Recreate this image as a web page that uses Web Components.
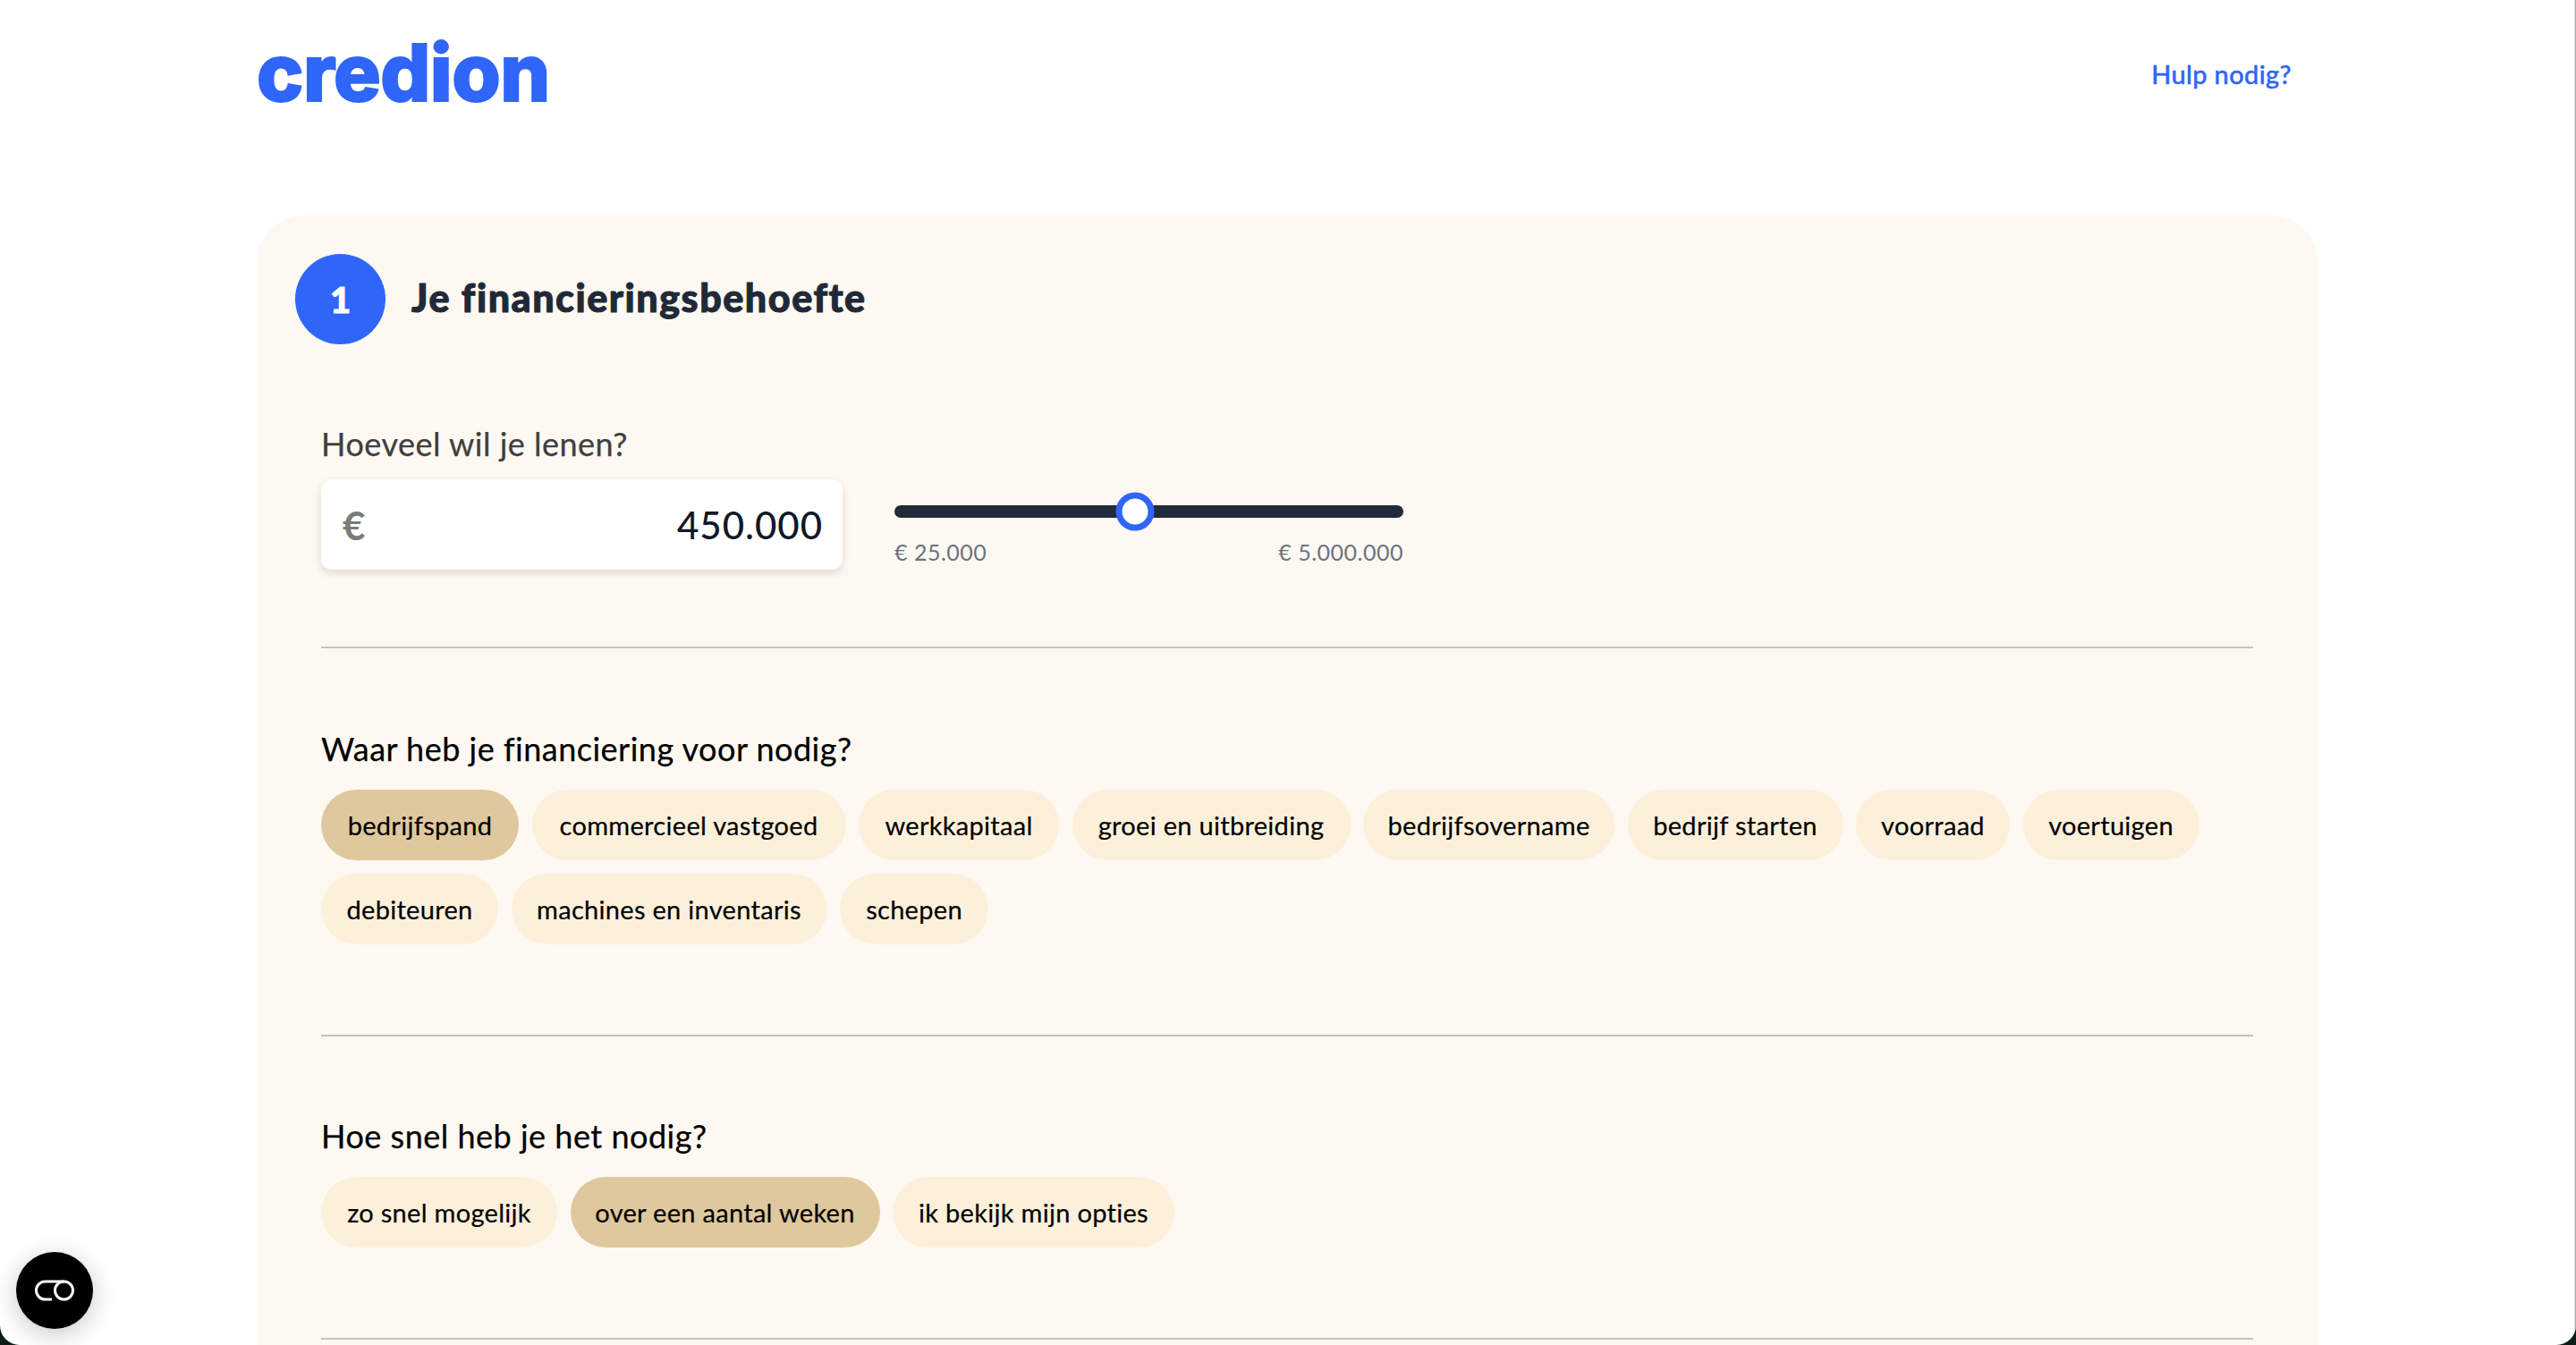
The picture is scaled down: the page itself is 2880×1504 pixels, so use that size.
<!DOCTYPE html>
<html lang="nl">
<head>
<meta charset="utf-8">
<title>Credion</title>
<style>
  html, body { margin: 0; height: 100%; background: #fff; }
  body { overflow: hidden; font-family: Lato, "Liberation Sans", sans-serif; color: #000; }
</style>
</head>
<body>
<credion-page>
  <site-header link="Hulp nodig?"></site-header>
  <finance-card>
    <step-heading number="1">Je financieringsbehoefte</step-heading>
    <amount-section label="Hoeveel wil je lenen?" value="450.000" min="€ 25.000" max="€ 5.000.000" position="47.3"></amount-section>
    <choice-section label="Waar heb je financiering voor nodig?">
      <choice-pill selected w="221">bedrijfspand</choice-pill>
      <choice-pill w="351">commercieel vastgoed</choice-pill>
      <choice-pill w="224">werkkapitaal</choice-pill>
      <choice-pill w="311">groei en uitbreiding</choice-pill>
      <choice-pill w="281">bedrijfsovername</choice-pill>
      <choice-pill w="241">bedrijf starten</choice-pill>
      <choice-pill w="172">voorraad</choice-pill>
      <choice-pill w="197">voertuigen</choice-pill>
      <choice-pill w="198">debiteuren</choice-pill>
      <choice-pill w="353">machines en inventaris</choice-pill>
      <choice-pill w="166">schepen</choice-pill>
    </choice-section>
    <choice-section label="Hoe snel heb je het nodig?">
      <choice-pill w="264">zo snel mogelijk</choice-pill>
      <choice-pill selected w="346">over een aantal weken</choice-pill>
      <choice-pill w="315">ik bekijk mijn opties</choice-pill>
    </choice-section>
  </finance-card>
</credion-page>
<chat-button></chat-button>
<window-frame></window-frame>

<script>
class CredionPage extends HTMLElement {
    constructor() {
        super();
        this.attachShadow({ mode: 'open' });
        this.shadowRoot.innerHTML = `
      <style>
        :host { display: block; padding-left: 287px; width: 2304px; }
      </style>
      <slot></slot>
    `;
    }
}

class SiteHeader extends HTMLElement {
    constructor() {
        super();
        this.attachShadow({ mode: 'open' });
        this.shadowRoot.innerHTML = `
      <style>
        :host { display: flex; justify-content: space-between; align-items: flex-start; height: 241px; padding-right: 29px; }
        .logo {
          font: 800 88px/100px Inter, sans-serif;
          color: #2f65f9;
          -webkit-text-stroke: 2px #2f65f9;
          letter-spacing: -.5px;
          margin-top: 31px;
        }
        a {
          font: 500 29px/40px Lato, sans-serif;
          letter-spacing: .35px;
          -webkit-text-stroke: .4px #2f65f9;
          color: #2f65f9;
          text-decoration: none;
          margin-top: 63px;
        }
      </style>
      <div class="logo">credion</div>
      <a href="#">${this.getAttribute('link')}</a>
    `;
    }
}

class FinanceCard extends HTMLElement {
    constructor() {
        super();
        this.attachShadow({ mode: 'open' });
        this.shadowRoot.innerHTML = `
      <style>
        :host {
          display: block;
          background: #fdf8f1;
          border-radius: 52px;
          padding: 43px 72px 200px;
        }
      </style>
      <slot></slot>
    `;
    }
}

class StepHeading extends HTMLElement {
    constructor() {
        super();
        this.attachShadow({ mode: 'open' });
        this.shadowRoot.innerHTML = `
      <style>
        :host { display: flex; align-items: center; gap: 29px; margin-left: -29px; height: 101px; }
        .num {
          width: 101px; height: 101px; border-radius: 50%;
          background: #2f65f9; color: #fff;
          display: flex; align-items: center; justify-content: center;
          font: 900 40px/1 Lato, sans-serif;
          -webkit-text-stroke: 1px #fff;
        }
        h2 {
          margin: -3px 0 0;
          font: 900 43px/50px Lato, sans-serif;
          letter-spacing: 1.55px;
          -webkit-text-stroke: 1px #1f2937;
          color: #1f2937;
        }
      </style>
      <div class="num">${this.getAttribute('number')}</div>
      <h2><slot></slot></h2>
    `;
    }
}

class AmountSection extends HTMLElement {
    constructor() {
        super();
        this.attachShadow({ mode: 'open' });
        this.shadowRoot.innerHTML = `
      <style>
        :host { display: block; padding: 87px 0 86px; margin-bottom: 1px; border-bottom: 2px solid #c6c3bc; }
        .label {
          font: 400 36px/48px Lato, sans-serif; letter-spacing: .5px;
          -webkit-text-stroke: .25px #3f3f3f;
          color: #3f3f3f; margin-bottom: 16px;
        }
        .row { display: flex; gap: 58px; align-items: flex-start; }
        .field {
          width: 583px; height: 101px; box-sizing: border-box;
          padding: 0 22px 0 24px;
          display: flex; align-items: center; justify-content: space-between;
          background: #fff; border-radius: 12px;
          box-shadow: 0 4px 8px rgba(60, 40, 10, .14);
        }
        .euro { font: 700 44px/1 Lato, sans-serif; color: #7b7b7b; }
        .value { font: 500 42px/1 Lato, sans-serif; letter-spacing: 1px; color: #111827; }
        range-slider { width: 569px; padding-top: 29px; }
      </style>
      <div class="label">${this.getAttribute('label')}</div>
      <div class="row">
        <div class="field"><span class="euro">€</span><span class="value">${this.getAttribute('value')}</span></div>
        <range-slider min="${this.getAttribute('min')}" max="${this.getAttribute('max')}" position="${this.getAttribute('position')}"></range-slider>
      </div>
    `;
    }
}

class RangeSlider extends HTMLElement {
    constructor() {
        super();
        this.attachShadow({ mode: 'open' });
        this.shadowRoot.innerHTML = `
      <style>
        :host { display: block; }
        .track { position: relative; height: 14px; border-radius: 7px; background: #222b3a; }
        .thumb {
          position: absolute; top: 50%;
          width: 43px; height: 43px; box-sizing: border-box;
          border: 7px solid #2f65f9; border-radius: 50%; background: #fff;
          transform: translate(-50%, -50%);
        }
        .ends {
          display: flex; justify-content: space-between;
          margin-top: 22px; font: 400 25px/32px Lato, sans-serif; letter-spacing: .5px; color: #6b7280;
        }
      </style>
      <div class="track"><div class="thumb" style="left:${this.getAttribute('position')}%"></div></div>
      <div class="ends"><span>${this.getAttribute('min')}</span><span>${this.getAttribute('max')}</span></div>
    `;
    }
}

class ChoiceSection extends HTMLElement {
    constructor() {
        super();
        this.attachShadow({ mode: 'open' });
        this.shadowRoot.innerHTML = `
      <style>
        :host { display: block; padding: 87px 0 101px; border-bottom: 2px solid #c6c3bc; }
        .label {
          font: 400 36px/48px Lato, sans-serif; letter-spacing: .5px;
          -webkit-text-stroke: .25px #000;
          margin-bottom: 22px;
        }
        .pills { display: flex; flex-wrap: wrap; gap: 15px 14.5px; }
      </style>
      <div class="label">${this.getAttribute('label')}</div>
      <div class="pills"><slot></slot></div>
    `;
    }
}

class ChoicePill extends HTMLElement {
    constructor() {
        super();
        this.attachShadow({ mode: 'open' });
        const w = this.getAttribute('w');
        this.shadowRoot.innerHTML = `
      <style>
        :host {
          display: flex; align-items: center; justify-content: center;
          width: ${w}px; height: 79px;
          border-radius: 40px;
          background: #fcf0db;
          font: 400 29px/1 Lato, sans-serif;
          letter-spacing: .3px;
          -webkit-text-stroke: .2px #000;
          white-space: nowrap;
        }
        :host([selected]) { background: #dfc89d; }
      </style>
      <slot></slot>
    `;
    }
}

class ChatButton extends HTMLElement {
    constructor() {
        super();
        this.attachShadow({ mode: 'open' });
        this.shadowRoot.innerHTML = `
      <style>
        :host {
          position: fixed; left: 18px; top: 1400px;
          width: 86px; height: 86px; border-radius: 50%;
          background: #000;
          box-shadow: 0 6px 28px rgba(0, 0, 0, .22);
          display: flex; align-items: center; justify-content: center;
        }
      </style>
      <svg width="46" height="24" viewBox="0 0 46 24" fill="none" stroke="#fff" stroke-width="3">
        <path d="M34 2H12.5a10 10 0 0 0 0 20H20"/>
        <circle cx="33.5" cy="12" r="10"/>
      </svg>
    `;
    }
}

// rounded window corners and the thin edge on the right
class WindowFrame extends HTMLElement {
    constructor() {
        super();
        this.attachShadow({ mode: 'open' });
        this.shadowRoot.innerHTML = `
      <style>
        :host { position: fixed; inset: 0; overflow: hidden; pointer-events: none; }
        .frame {
          position: absolute; inset: 0;
          border-radius: 0 0 22px 22px;
          box-shadow: 0 0 0 30px #0f1d16;
          overflow: hidden;
        }
        .edge {
          position: absolute; top: 0; right: 0; bottom: 0; width: 2px;
          background: linear-gradient(to right, transparent, #8a8a8a);
        }
      </style>
      <div class="frame"><div class="edge"></div></div>
    `;
    }
}

customElements.define('credion-page', CredionPage);
customElements.define('site-header', SiteHeader);
customElements.define('finance-card', FinanceCard);
customElements.define('step-heading', StepHeading);
customElements.define('amount-section', AmountSection);
customElements.define('range-slider', RangeSlider);
customElements.define('choice-section', ChoiceSection);
customElements.define('choice-pill', ChoicePill);
customElements.define('chat-button', ChatButton);
customElements.define('window-frame', WindowFrame);
</script>
</body>
</html>
